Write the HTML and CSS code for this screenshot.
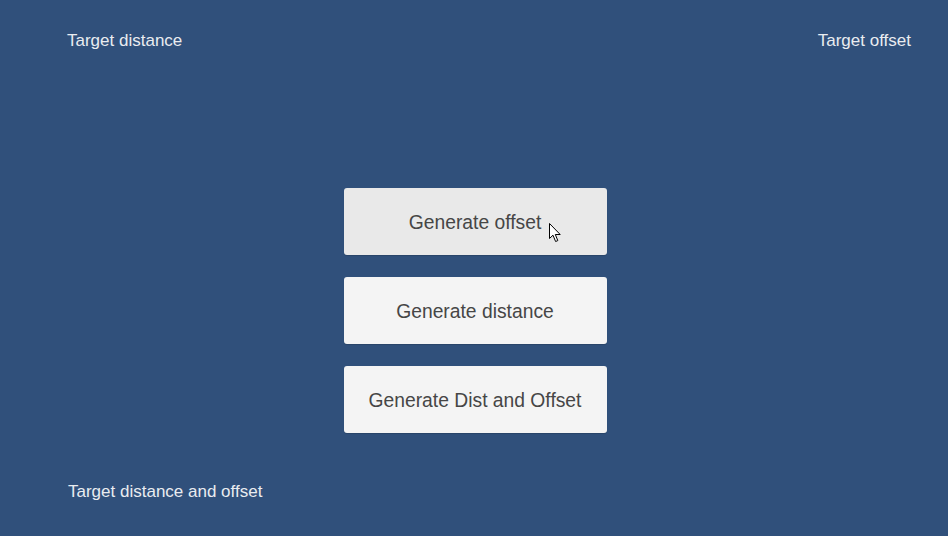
FILE: index.html
```html
<!DOCTYPE html>
<html>
<head>
<meta charset="utf-8">
<link rel="stylesheet" href="styles.css">
</head>
<body>
<div class="screen">
  <div class="top-row">
    <span class="label">Target distance</span>
    <span class="label">Target offset</span>
  </div>
  <div class="buttons">
    <button class="btn btn-hover">Generate offset
      <svg class="cursor" width="13" height="20" viewBox="0 0 13 20"><path d="M0.5 0.5 L0.5 15.5 L4 12.2 L6.6 18.5 L8.8 17.6 L6.3 11.5 L11.2 11.5 Z" fill="#fff" stroke="#000" stroke-width="1" stroke-linejoin="miter"/></svg>
    </button>
    <button class="btn">Generate distance</button>
    <button class="btn">Generate Dist and Offset</button>
  </div>
  <div class="bottom-row">
    <span class="label">Target distance and offset</span>
  </div>
</div>
</body>
</html>
```
FILE: styles.css
```css
html, body {
  margin: 0;
  padding: 0;
}
body {
  font-family: "Liberation Sans", Arial, sans-serif;
}
.screen {
  width: 948px;
  height: 536px;
  background: #30507b;
  display: flex;
  flex-direction: column;
  box-sizing: border-box;
}
.top-row {
  display: flex;
  justify-content: space-between;
  padding: 31px 37px 0 67px;
}
.label {
  color: #e9ecf0;
  font-size: 17px;
  line-height: 19px;
}
.buttons {
  display: flex;
  flex-direction: column;
  align-items: center;
  gap: 22px;
  margin-top: 138px;
  padding-left: 2px;
}
.btn {
  position: relative;
  width: 263px;
  height: 67px;
  border: none;
  border-radius: 3px;
  background: #f4f4f4;
  color: #464646;
  font-family: "Liberation Sans", Arial, sans-serif;
  font-size: 19.3px;
  padding: 2px 0 0 0;
  margin: 0;
  box-shadow: 0 1px 1px rgba(0,0,0,0.15);
}
.btn-hover {
  background: #e9e9e9;
}
.cursor {
  position: absolute;
  left: 205px;
  top: 35px;
}
.bottom-row {
  margin-top: auto;
  padding: 0 0 35px 68px;
}
```
